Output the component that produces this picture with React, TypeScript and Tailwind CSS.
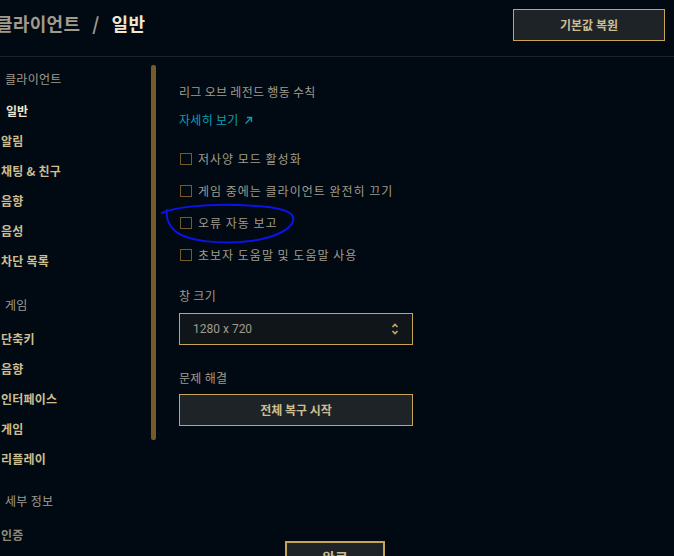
const FONT = { fontFamily: '"Noto Sans CJK KR", "Noto Sans", sans-serif' };

type NavEntry = { label: string; kind: 'header' | 'item' | 'active' | 'dim'; mt: string };

const NAV: NavEntry[] = [
  { label: '클라이언트', kind: 'header', mt: 'mt-0' },
  { label: '일반', kind: 'active', mt: 'mt-[2px]' },
  { label: '알림', kind: 'item', mt: 'mt-0' },
  { label: '채팅 & 친구', kind: 'item', mt: 'mt-0' },
  { label: '음향', kind: 'item', mt: 'mt-0' },
  { label: '음성', kind: 'item', mt: 'mt-0' },
  { label: '차단 목록', kind: 'item', mt: 'mt-0' },
  { label: '게임', kind: 'header', mt: 'mt-[14px]' },
  { label: '단축키', kind: 'item', mt: 'mt-[4px]' },
  { label: '음향', kind: 'item', mt: 'mt-0' },
  { label: '인터페이스', kind: 'item', mt: 'mt-0' },
  { label: '게임', kind: 'item', mt: 'mt-0' },
  { label: '리플레이', kind: 'item', mt: 'mt-0' },
  { label: '세부 정보', kind: 'header', mt: 'mt-[12px]' },
  { label: '인증', kind: 'dim', mt: 'mt-[4px]' },
];

const CHECKS = [
  '저사양 모드 활성화',
  '게임 중에는 클라이언트 완전히 끄기',
  '오류 자동 보고',
  '초보자 도움말 및 도움말 사용',
];

function NavRow({ entry }: { entry: NavEntry }) {
  if (entry.kind === 'header') {
    return (
      <div className={`h-[30px] flex items-center pl-[5px] text-[12px] text-[#a09b8c] tracking-[0.3px] ${entry.mt}`}>
        {entry.label}
      </div>
    );
  }
  if (entry.kind === 'active') {
    return (
      <div className={`h-[30px] flex items-center pl-[6px] text-[12px] font-bold text-[#f0e6d2] ${entry.mt}`}>
        {entry.label}
      </div>
    );
  }
  return (
    <div
      className={`h-[30px] flex items-center pl-[1px] text-[12px] font-bold tracking-[0.2px] ${
        entry.kind === 'dim' ? 'text-[#8f8a78]' : 'text-[#cdbe91]'
      } ${entry.mt}`}
    >
      {entry.label}
    </div>
  );
}

export default function App() {
  return (
    <div className="relative w-[674px] h-[556px] overflow-hidden bg-[#010a13] flex flex-col" style={FONT}>
      {/* header */}
      <div className="h-[57px] shrink-0 flex items-start justify-between border-b border-[#1e2328]">
        <div className="mt-[11px] ml-[-4px] h-[24px] flex items-center gap-[12px] text-[18px] font-bold tracking-[0.3px]">
          <span className="text-[#a09b8c]">클라이언트</span>
          <span className="text-[#a09b8c]">/</span>
          <span className="text-[#f0e6d2]">일반</span>
        </div>
        <button className="mt-[9px] mr-[9px] w-[152px] h-[32px] bg-[#1e2328] border border-[#c8a456] text-[12px] font-bold text-[#cdbe91]">
          기본값 복원
        </button>
      </div>

      {/* body */}
      <div className="h-[484px] shrink-0 flex">
        <nav className="w-[151px] shrink-0 pt-[7px]">
          {NAV.map((entry, i) => (
            <NavRow key={`${entry.label}-${i}`} entry={entry} />
          ))}
        </nav>
        <div className="w-[5px] h-[375px] mt-[8px] rounded-[2px] bg-[#785a28]" />

        <div className="ml-[23px] w-[234px] pt-[26px] flex flex-col">
          <p className="h-[18px] leading-[18px] text-[12px] text-[#a09b8c] tracking-[0.3px]">리그 오브 레전드 행동 수칙</p>
          <a className="mt-[10px] h-[18px] flex items-center gap-[5px] text-[12px] text-[#0aa0b4] tracking-[0.3px]">
            자세히 보기
            <svg width="9" height="9" viewBox="0 0 9 9" fill="none" stroke="#0aa0b4" strokeWidth="1.3">
              <path d="M1.5 7.5 L7.5 1.5 M3 1.5 H7.5 V6" />
            </svg>
          </a>

          <div className="mt-[21px] flex flex-col gap-[14px]">
            {CHECKS.map((label) => (
              <label
                key={label}
                className="h-[18px] flex items-center gap-[6px] text-[12px] text-[#a09b8c] tracking-[1px] whitespace-nowrap"
              >
                <span className="ml-[1px] w-[12px] h-[12px] shrink-0 border border-[#785a28] bg-[#010a13]" />
                {label}
              </label>
            ))}
          </div>

          <p className="mt-[23px] h-[18px] leading-[18px] text-[12px] text-[#a09b8c] tracking-[0.3px]">창 크기</p>
          <div className="mt-[8px] h-[32px] flex items-center justify-between px-[13px] bg-[#10151a] border border-[#c8a456]">
            <span className="text-[12px] text-[#a09b8c]" style={{ fontFamily: 'Roboto, "Noto Sans", sans-serif' }}>
              1280 x 720
            </span>
            <svg width="8" height="14" viewBox="0 0 8 14" fill="none" stroke="#c8aa6e" strokeWidth="1.6">
              <path d="M1.5 5 L4 2.5 L6.5 5" />
              <path d="M1.5 9 L4 11.5 L6.5 9" />
            </svg>
          </div>

          <p className="mt-[24px] h-[18px] leading-[18px] text-[12px] text-[#a09b8c] tracking-[0.3px]">문제 해결</p>
          <button className="mt-[7px] h-[32px] bg-[#1e2328] border border-[#c8a456] text-[12px] font-bold text-[#cdbe91]">
            전체 복구 시작
          </button>
        </div>
      </div>

      {/* footer */}
      <div className="flex justify-center pr-[4px]">
        <button className="w-[100px] h-[32px] bg-[#1e2328] border-2 border-[#c8a456] text-[14px] font-bold text-[#cdbe91]">
          완료
        </button>
      </div>

      {/* hand-drawn annotation */}
      <svg className="absolute inset-0 pointer-events-none" width="674" height="556" viewBox="0 0 674 556" fill="none">
        <path
          d="M162 213 C175 207 205 204 238 205 C265 206 290 208 293 217 C296 228 275 238 250 241 C220 245 185 241 174 230 C167 223 166 216 167 210"
          stroke="#0a14e6"
          strokeWidth="2"
          strokeLinecap="round"
        />
      </svg>
    </div>
  );
}
